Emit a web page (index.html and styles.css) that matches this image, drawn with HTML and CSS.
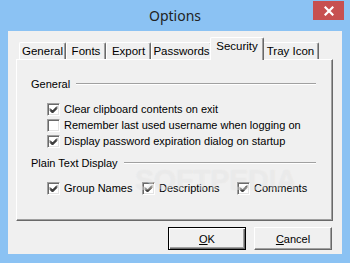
FILE: index.html
```html
<!DOCTYPE html>
<html>
<head>
<meta charset="utf-8">
<link rel="stylesheet" href="styles.css">
</head>
<body>
<div class="window">
  <div class="titlebar">
    <span class="title">Options</span>
    <div class="close">
      <svg width="10" height="10" viewBox="0 0 10 10"><path d="M1.5 1.5 L8.5 8.5 M8.5 1.5 L1.5 8.5" stroke="#fff" stroke-width="2.2" stroke-linecap="square"/></svg>
    </div>
  </div>
  <div class="client">
    <div class="tabs">
      <div class="tab t-general">General</div>
      <div class="tab t-fonts">Fonts</div>
      <div class="tab t-export">Export</div>
      <div class="tab t-pass">Passwords</div>
      <div class="tab t-sec active">Security</div>
      <div class="tab t-tray">Tray Icon</div>
    </div>
    <div class="panel">
      <div class="group-head"><span>General</span><i class="rule"></i></div>
      <div class="checks">
        <div class="check"><span class="box on"><svg width="9" height="9" viewBox="0 0 9 9"><path d="M1 3.5 L3.5 6 L8 1.5 M1 4.5 L3.5 7 L8 2.5 M1 5.5 L3.5 8 L8 3.5" stroke="#000" stroke-width="1" fill="none"/></svg></span>Clear clipboard contents on exit</div>
        <div class="check"><span class="box"></span>Remember last used username when logging on</div>
        <div class="check"><span class="box on"><svg width="9" height="9" viewBox="0 0 9 9"><path d="M1 3.5 L3.5 6 L8 1.5 M1 4.5 L3.5 7 L8 2.5 M1 5.5 L3.5 8 L8 3.5" stroke="#000" stroke-width="1" fill="none"/></svg></span>Display password expiration dialog on startup</div>
      </div>
      <div class="group-head second"><span>Plain Text Display</span><i class="rule"></i></div>
      <div class="checks row">
        <div class="check"><span class="box on"><svg width="9" height="9" viewBox="0 0 9 9"><path d="M1 3.5 L3.5 6 L8 1.5 M1 4.5 L3.5 7 L8 2.5 M1 5.5 L3.5 8 L8 3.5" stroke="#000" stroke-width="1" fill="none"/></svg></span>Group Names</div>
        <div class="check"><span class="box on"><svg width="9" height="9" viewBox="0 0 9 9"><path d="M1 3.5 L3.5 6 L8 1.5 M1 4.5 L3.5 7 L8 2.5 M1 5.5 L3.5 8 L8 3.5" stroke="#000" stroke-width="1" fill="none"/></svg></span>Descriptions</div>
        <div class="check"><span class="box on"><svg width="9" height="9" viewBox="0 0 9 9"><path d="M1 3.5 L3.5 6 L8 1.5 M1 4.5 L3.5 7 L8 2.5 M1 5.5 L3.5 8 L8 3.5" stroke="#000" stroke-width="1" fill="none"/></svg></span>Comments</div>
      </div>
      <div class="watermark">SOFTPEDIA</div>
    </div>
    <div class="buttons">
      <div class="btn default"><span class="u">O</span>K</div>
      <div class="btn"><span class="u">C</span>ancel</div>
    </div>
  </div>
</div>
</body>
</html>
```
FILE: styles.css
```css
html, body {
  margin: 0;
  padding: 0;
}
body {
  width: 350px;
  height: 263px;
  overflow: hidden;
  background: #8bc2f3;
  font-family: "Liberation Sans", Arial, sans-serif;
  font-size: 11px;
  color: #000;
}
.window {
  width: 350px;
  height: 263px;
  background: #8bc2f3;
  display: flex;
  flex-direction: column;
}
.titlebar {
  position: relative;
  height: 31px;
  display: flex;
  align-items: center;
  justify-content: center;
}
.title {
  font-family: "Noto Sans", "Open Sans", sans-serif;
  font-size: 14px;
  color: #222;
  margin-top: 0;
}
.close {
  position: absolute;
  left: 313px;
  top: 1px;
  width: 31px;
  height: 19px;
  background: #c75050;
  display: flex;
  align-items: center;
  justify-content: center;
}
.close svg { display: block; }
.client {
  margin: 0 8px 9px 8px;
  height: 223px;
  background: #f0f0f0;
  box-sizing: border-box;
  padding: 6px 9px 0 8px;
  display: flex;
  flex-direction: column;
}
.tabs {
  display: flex;
  align-items: flex-end;
  height: 22px;
  padding-left: 3px;
  position: relative;
  z-index: 2;
}
.tab {
  height: 17px;
  box-sizing: border-box;
  border-left: 1px solid #fff;
  border-top: 1px solid #fff;
  border-right: 1px solid #696969;
  box-shadow: inset -1px 0 0 #a0a0a0;
  border-radius: 2px 2px 0 0;
  text-align: center;
  line-height: 15px;
  padding-top: 1px;
  background: #f0f0f0;
  white-space: nowrap;
  font-size: 11.5px;
}
.t-general { width: 47px; }
.t-fonts { width: 40px; }
.t-export { width: 45px; }
.t-pass { width: 61px; }
.t-sec { width: 54px; }
.t-tray { width: 57px; }
.tab.active {
  height: 23px;
  margin: 0 -2px -1px -2px;
  padding-top: 0;
  line-height: 17px;
  position: relative;
  z-index: 3;
}
.panel {
  position: relative;
  z-index: 1;
  height: 162px;
  box-sizing: border-box;
  border-left: 1px solid #fff;
  border-top: 1px solid #fff;
  border-right: 1px solid #696969;
  border-bottom: 1px solid #696969;
  box-shadow: inset -1px -1px 0 #a0a0a0;
  padding: 16px 16px 0 14px;
}
.group-head {
  display: flex;
  align-items: center;
  height: 16px;
}
.group-head.second { margin-top: 6px; }
.rule {
  flex: 1;
  margin-left: 6px;
  height: 0;
  border-top: 1px solid #a0a0a0;
  border-bottom: 1px solid #fff;
}
.checks {
  margin: 9px 0 0 16px;
}
.check {
  display: flex;
  align-items: center;
  height: 16px;
  white-space: nowrap;
}
.checks.row {
  display: grid;
  grid-template-columns: 95px 95px auto;
}
.box {
  width: 13px;
  height: 13px;
  box-sizing: border-box;
  border-top: 1px solid #a0a0a0;
  border-left: 1px solid #a0a0a0;
  border-right: 1px solid #fff;
  border-bottom: 1px solid #fff;
  box-shadow: inset 1px 1px 0 #696969, inset -1px -1px 0 #e3e3e3;
  background: #fff;
  margin-right: 4px;
  display: flex;
  align-items: center;
  justify-content: center;
  flex: none;
}
.box svg { display: block; }
.watermark {
  position: absolute;
  left: 118px;
  top: 104px;
  font-family: "Liberation Sans", sans-serif;
  font-weight: bold;
  font-size: 29px;
  letter-spacing: -0.5px;
  color: rgba(255, 255, 255, 0.3);
  text-shadow: 0 0 1px rgba(170, 170, 170, 0.2);
  pointer-events: none;
}
.buttons {
  display: flex;
  justify-content: flex-end;
  gap: 8px;
  margin-top: 6px;
  padding-right: 1px;
}
.btn {
  width: 78px;
  height: 23px;
  box-sizing: border-box;
  border-top: 1px solid #fff;
  border-left: 1px solid #fff;
  border-right: 1px solid #696969;
  border-bottom: 1px solid #696969;
  box-shadow: inset -1px -1px 0 #a0a0a0;
  display: flex;
  align-items: center;
  justify-content: center;
  background: #f0f0f0;
}
.btn.default {
  border: 1px solid #000;
  box-shadow: inset 1px 1px 0 #fff, inset -1px -1px 0 #696969, inset -2px -2px 0 #a0a0a0;
}
.u { text-decoration: underline; }
```
